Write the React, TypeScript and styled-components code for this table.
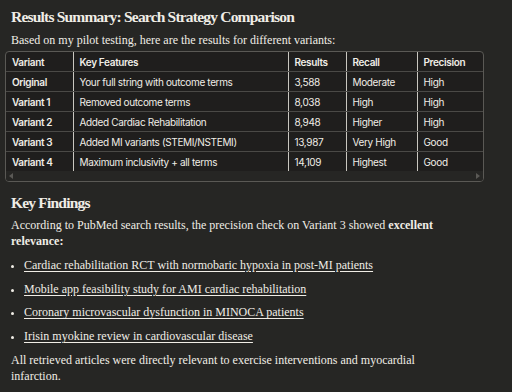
import styled, { createGlobalStyle } from "styled-components";

const GlobalStyle = createGlobalStyle`
  html, body {
    margin: 0;
    padding: 0;
    background: #262624;
  }
`;

const rows = [
  ["Original", "Your full string with outcome terms", "3,588", "Moderate", "High"],
  ["Variant 1", "Removed outcome terms", "8,038", "High", "High"],
  ["Variant 2", "Added Cardiac Rehabilitation", "8,948", "Higher", "High"],
  ["Variant 3", "Added MI variants (STEMI/NSTEMI)", "13,987", "Very High", "Good"],
  ["Variant 4", "Maximum inclusivity + all terms", "14,109", "Highest", "Good"],
];

const widths = [67, 215, 58, 71, 67];

const links = [
  "Cardiac rehabilitation RCT with normobaric hypoxia in post-MI patients",
  "Mobile app feasibility study for AMI cardiac rehabilitation",
  "Coronary microvascular dysfunction in MINOCA patients",
  "Irisin myokine review in cardiovascular disease",
];

export default function App() {
  return (
    <Page>
      <GlobalStyle />
      <Heading>Results Summary: Search Strategy Comparison</Heading>
      <Text $top={5}>Based on my pilot testing, here are the results for different variants:</Text>
      <TableBox>
        <Table>
          <colgroup>
            {widths.map((w, i) => (
              <col key={i} style={{ width: w }} />
            ))}
          </colgroup>
          <thead>
            <tr>
              <Th>Variant</Th>
              <Th>Key Features</Th>
              <Th>Results</Th>
              <Th>Recall</Th>
              <Th>Precision</Th>
            </tr>
          </thead>
          <tbody>
            {rows.map((r) => (
              <tr key={r[0]}>
                {r.map((c, i) => (
                  <Td key={i} $bold={i === 0}>
                    {c}
                  </Td>
                ))}
              </tr>
            ))}
          </tbody>
        </Table>
        <ScrollBar>
          <Arrow $dir="left" />
          <Arrow $dir="right" />
        </ScrollBar>
      </TableBox>
      <Heading $top={11}>Key Findings</Heading>
      <Text $top={4}>
        According to PubMed search results, the precision check on Variant 3 showed{" "}
        <b>excellent relevance:</b>
      </Text>
      <List>
        {links.map((l) => (
          <Item key={l}>
            <Link href="#">{l}</Link>
          </Item>
        ))}
      </List>
      <Text $top={3}>
        All retrieved articles were directly relevant to exercise interventions and myocardial
        infarction.
      </Text>
    </Page>
  );
}

const Page = styled.div`
  padding: 7px 28px 0 5px;
  color: #f0ede6;
  font-family: "Liberation Serif", serif;
`;

const Heading = styled.div<{ $top?: number }>`
  margin: ${(p) => p.$top ?? 0}px 0 0 6px;
  font-size: 15.5px;
  font-weight: bold;
  line-height: 20px;
  letter-spacing: -0.8px;
`;

const Text = styled.div<{ $top?: number }>`
  margin: ${(p) => p.$top ?? 0}px 0 0 6px;
  font-size: 12px;
  line-height: 16px;
  padding-right: 30px;
`;

const TableBox = styled.div`
  margin-top: 3px;
  border: 1px solid #5a5955;
  border-radius: 4px;
  background: #1f1e1d;
  overflow: hidden;
`;

const Table = styled.table`
  border-collapse: collapse;
  table-layout: fixed;
  width: 478px;
  font-family: Inter, "Liberation Sans", sans-serif;
  font-size: 10px;
  letter-spacing: -0.35px;
`;

const Th = styled.th`
  text-align: left;
  font-weight: 600;
  height: 19px;
  padding: 0 5px 0 6px;
  border-left: 1px solid #c9c7c0;
  border-bottom: 1px solid #4a4946;
  &:first-child {
    border-left: none;
  }
`;

const Td = styled.td<{ $bold?: boolean }>`
  height: 19px;
  padding: 0 5px 0 6px;
  font-weight: ${(p) => (p.$bold ? 600 : 400)};
  border-left: 1px solid #c9c7c0;
  border-bottom: 1px solid #4a4946;
  &:first-child {
    border-left: none;
  }
  tr:last-child & {
    border-bottom: none;
  }
`;

const ScrollBar = styled.div`
  height: 10px;
  background: #262624;
  display: flex;
  justify-content: space-between;
  align-items: center;
  padding: 0 3px;
`;

const Arrow = styled.div<{ $dir: "left" | "right" }>`
  width: 0;
  height: 0;
  border-top: 3px solid transparent;
  border-bottom: 3px solid transparent;
  ${(p) =>
    p.$dir === "left"
      ? "border-right: 4px solid #5a5955;"
      : "border-left: 4px solid #5a5955;"}
`;

const List = styled.ul`
  margin: 8px 0 0 6px;
  padding: 0 0 0 13px;
  font-size: 12px;
  line-height: 16px;
`;

const Item = styled.li`
  margin-bottom: 7.7px;
  &::marker {
    font-size: 11px;
  }
`;

const Link = styled.a`
  color: #f0ede6;
  text-decoration: underline;
  text-underline-offset: 2px;
`;
